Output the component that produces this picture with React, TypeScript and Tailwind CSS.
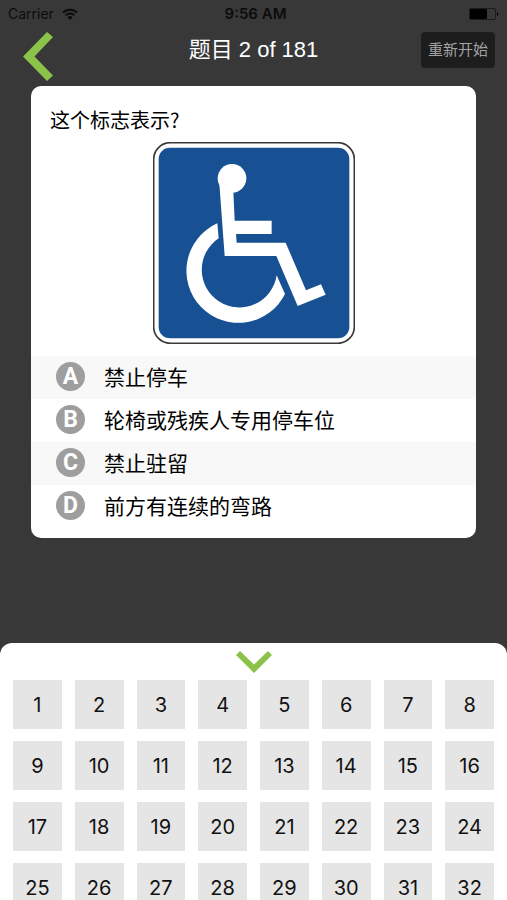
import { useState } from "react"

type Option = {
  letter: string
  text: string
}

const options: Option[] = [
  { letter: "A", text: "禁止停车" },
  { letter: "B", text: "轮椅或残疾人专用停车位" },
  { letter: "C", text: "禁止驻留" },
  { letter: "D", text: "前方有连续的弯路" },
]

const questionNumbers = Array.from({ length: 32 }, (_, i) => i + 1)

const StatusBar = () => (
  <div className="grid h-7 grid-cols-[1fr_auto_1fr] items-center px-2 font-['Inter','Liberation_Sans',sans-serif] text-sm text-[#0c0c0c]">
    <div className="flex items-center gap-2">
      <span>Carrier</span>
      <svg className="h-3 w-4" viewBox="0 0 16 12" fill="none" stroke="currentColor" strokeWidth="2">
        <path d="M1 4.6a10 10 0 0 1 14 0" />
        <path d="M3.6 7.4a6.2 6.2 0 0 1 8.8 0" />
        <path d="M8 12 5.4 9.4a3.7 3.7 0 0 1 5.2 0Z" fill="currentColor" stroke="none" />
      </svg>
    </div>
    <span className="pl-1 text-[15px] font-semibold">9:56 AM</span>
    <svg className="h-3 w-[30px] justify-self-end" viewBox="0 0 30 12">
      <rect x="0.5" y="0.5" width="26" height="11" rx="1.5" fill="none" stroke="#1c1c1c" />
      <rect x="1" y="1" width="17" height="10" rx="1" fill="#000" />
      <path d="M28 4a2.2 2.2 0 0 1 0 4Z" fill="#000" />
    </svg>
  </div>
)

const AccessibleSign = () => (
  <svg
    className="mx-auto size-[202px]"
    viewBox="0 0 606 606"
    role="img"
    aria-label="轮椅标志"
  >
    <rect x="2" y="2" width="602" height="602" rx="50" fill="#fff" stroke="#3a3a3a" strokeWidth="5" />
    <rect x="17" y="17" width="572" height="572" rx="34" fill="#175093" />
    <g fill="#fff">
      <circle cx="237" cy="109" r="43" />
      <path d="M199 125 241 148 245 236H356V276H249L251 302H398L459 445 504 427 518 458 434 492 370 342H215Z" />
      <path d="M193 244A156 156 0 1 0 396 456L371 400A113 113 0 1 1 197 289Z" />
    </g>
  </svg>
)

const App = () => {
  const [selected, setSelected] = useState<string | null>(null)
  const [current, setCurrent] = useState(2)
  const [open, setOpen] = useState(true)

  const restart = () => {
    setCurrent(1)
    setSelected(null)
  }

  return (
    <main className="flex h-screen flex-col overflow-hidden bg-[#383838] font-['Liberation_Sans','Noto_Sans_CJK_SC',sans-serif] text-black">
      <StatusBar />

      {/* Header */}
      <header className="grid grid-cols-[1fr_auto_1fr] items-start px-3 pt-1">
        <button
          aria-label="返回"
          className="ml-[11px] justify-self-start"
          onClick={() => setCurrent((prev) => Math.max(1, prev - 1))}
        >
          <svg className="h-[49px] w-[30px]" viewBox="0 0 30 49" fill="#8bc34a">
            <path d="M24 0 30 5 11.500 24.500 30 43.500 24 49 0 24.500Z" />
          </svg>
        </button>
        <h1 className="pt-1 text-[22px] leading-7 text-white">
          题目 {current} of 181
        </h1>
        <button
          onClick={restart}
          className="h-9 justify-self-end rounded bg-[#1d1d1d] px-[7px] text-[15px] text-[#a3a3a3]"
        >
          重新开始
        </button>
      </header>

      {/* Question */}
      <section className="mx-[31px] mt-[5px] shrink-0 overflow-hidden rounded-[10px] bg-white pb-[10px]">
        <h2 className="px-[19px] pt-5 pb-2 font-['Noto_Sans_CJK_SC',sans-serif] text-xl leading-7">
          这个标志表示?
        </h2>
        <AccessibleSign />
        <ul className="mt-3">
          {options.map((option) => (
            <li key={option.letter} className="odd:bg-[#f8f8f8]">
              <button
                aria-pressed={selected === option.letter}
                onClick={() => setSelected(option.letter)}
                className="flex h-[43px] w-full items-center gap-[19px] px-[25px] text-left text-[21px]"
              >
                <span className="mb-[3px] flex size-[29px] items-center justify-center rounded-full bg-[#9e9e9e] font-['Roboto',sans-serif] text-[23px] leading-none font-bold text-white">
                  {option.letter}
                </span>
                {option.text}
              </button>
            </li>
          ))}
        </ul>
      </section>

      {/* Question picker */}
      <section className="mt-[105px] min-h-0 flex-1 overflow-hidden rounded-t-xl bg-white">
        <button
          aria-label="收起"
          aria-expanded={open}
          onClick={() => setOpen(!open)}
          className="mx-auto block pt-2 pb-[7px]"
        >
          <svg className="h-[22px] w-9" viewBox="0 0 36 22" fill="#8bc34a">
            <path d="M0 4 4 0 18 13.500 32 0 36 4 18 22Z" />
          </svg>
        </button>
        {open && (
          <div className="grid grid-cols-8 gap-x-[13px] gap-y-3 px-[13px] font-['Inter','Liberation_Sans',sans-serif]">
            {questionNumbers.map((n) => (
              <button
                key={n}
                onClick={() => setCurrent(n)}
                className="h-[49px] bg-[#e5e5e5] text-xl text-[#111111]"
              >
                {n}
              </button>
            ))}
          </div>
        )}
      </section>
    </main>
  )
}

export default App
